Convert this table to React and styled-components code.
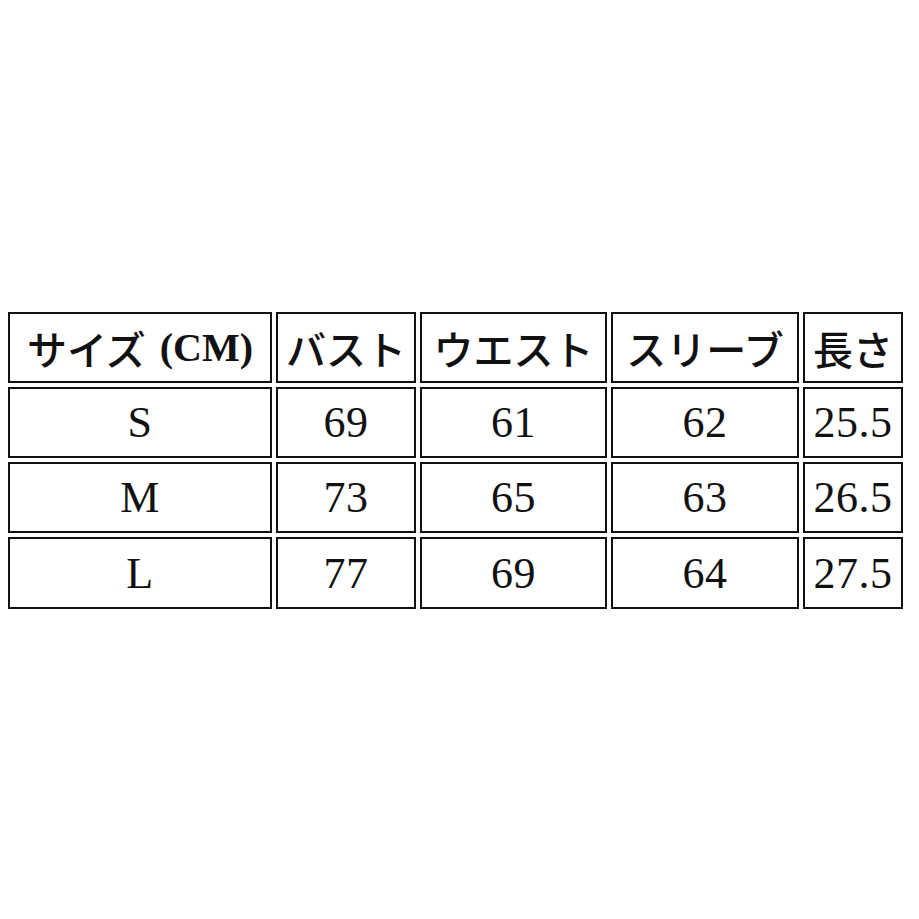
import React from "react";
import styled, { createGlobalStyle } from "styled-components";

const GlobalStyle = createGlobalStyle`
  html, body {
    margin: 0;
    padding: 0;
    background: #ffffff;
  }
`;

const Page = styled.div`
  box-sizing: border-box;
  min-height: 919px;
  display: flex;
  align-items: center;
  padding: 2px 8px 0;
`;

const SizeGrid = styled.div`
  display: grid;
  grid-template-columns: 264px 140px 187px 188px 100px;
  grid-template-rows: 71px 71px 71px 72px;
  column-gap: 4px;
  row-gap: 4px;
`;

const Cell = styled.div`
  box-sizing: border-box;
  border: 2px solid #121212;
  display: flex;
  align-items: center;
  justify-content: center;
  white-space: nowrap;
  overflow: hidden;
  color: #111;
  font-family: "Liberation Serif", "Noto Sans CJK JP", serif;
  font-size: ${(p) => (p.$head ? "40px" : "44px")};
  font-weight: ${(p) => (p.$head ? 700 : 400)};
  letter-spacing: ${(p) => (p.$head ? "0" : "0.5px")};
`;

const Kana = styled.span`
  font-family: "Noto Sans CJK JP", sans-serif;
  font-weight: 500;
  margin-right: ${(p) => p.$gap || 0}px;
`;

const headers = [
  { kana: "サイズ", latin: "(CM)" },
  { kana: "バスト" },
  { kana: "ウエスト" },
  { kana: "スリーブ" },
  { kana: "長さ" },
];

const rows = [
  ["S", "69", "61", "62", "25.5"],
  ["M", "73", "65", "63", "26.5"],
  ["L", "77", "69", "64", "27.5"],
];

export default function App() {
  return (
    <>
      <GlobalStyle />
      <Page>
        <SizeGrid>
          {headers.map((h) => (
            <Cell $head key={h.kana}>
              <Kana $gap={h.latin ? 14 : 0}>{h.kana}</Kana>
              {h.latin}
            </Cell>
          ))}
          {rows.map((row) =>
            row.map((v, i) => <Cell key={row[0] + i}>{v}</Cell>)
          )}
        </SizeGrid>
      </Page>
    </>
  );
}
